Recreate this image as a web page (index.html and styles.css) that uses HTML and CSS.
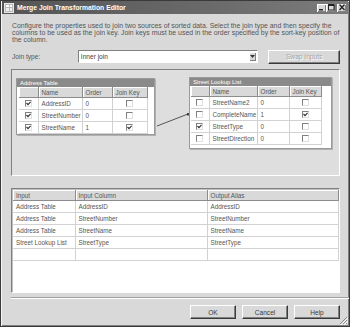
FILE: index.html
```html
<!DOCTYPE html>
<html lang="en">
<head>
  <meta charset="UTF-8">
  <title>Merge Join Transformation Editor</title>
  <link rel="stylesheet" href="styles.css">
</head>
<body>
  <div class="window">
    <div class="titlebar">
      <svg class="app-icon" width="10" height="10" viewBox="0 0 10 10">
        <rect x="0.5" y="0.5" width="9" height="9" fill="#b8b8b8" stroke="#e8e8e8"/>
        <rect x="2" y="2" width="3" height="2" fill="#fff"/>
        <rect x="6" y="2" width="2" height="2" fill="#fff"/>
        <rect x="2" y="5" width="3" height="3" fill="#eee"/>
        <rect x="6" y="5" width="2" height="3" fill="#eee"/>
      </svg>
      <span class="title">Merge Join Transformation Editor</span>
      <div class="caption-btns">
        <span class="cap-btn"><svg width="8" height="7" viewBox="0 0 8 7"><rect x="1" y="5" width="4" height="1.5" fill="#222"/></svg></span>
        <span class="cap-btn"><svg width="8" height="7" viewBox="0 0 8 7"><rect x="1.5" y="0.5" width="5.5" height="5.5" fill="none" stroke="#222"/><rect x="1" y="0.5" width="6.5" height="1.5" fill="#222"/></svg></span>
        <span class="cap-btn close"><svg width="8" height="7" viewBox="0 0 8 7"><path d="M1.5 0.5 L6.5 6 M6.5 0.5 L1.5 6" stroke="#222" stroke-width="1.3"/></svg></span>
      </div>
    </div>

    <div class="content">
      <p class="desc">Configure the properties used to join two sources of sorted data. Select the join type and then specify the<br>columns to be used as the join key. Join keys must be used in the order specified by the sort-key position of<br>the column.</p>

      <div class="join-row">
        <span class="join-label">Join type:</span>
        <div class="combo">
          <span class="combo-text">Inner join</span>
          <span class="combo-drop"><svg width="5" height="3" viewBox="0 0 5 3"><path d="M0 0 H5 L2.5 3 Z" fill="#333"/></svg></span>
        </div>
        <button class="btn btn-disabled">Swap Inputs</button>
      </div>

      <div class="canvas">
        <svg class="link" width="327" height="105">
          <line x1="145" y1="56" x2="176" y2="44" stroke="#555" stroke-width="1"/>
          <rect x="175" y="43" width="2.5" height="2.5" fill="#444"/>
        </svg>

        <div class="node node-address">
          <div class="node-title">Address Table</div>
          <div class="node-body">
            <table class="cols">
              <colgroup><col class="c-chk"><col class="c-name"><col class="c-order"><col class="c-key"></colgroup>
              <tr class="hdr"><th></th><th>Name</th><th>Order</th><th>Join Key</th></tr>
              <tr><td class="ck"><span class="chk on"></span></td><td>AddressID</td><td>0</td><td class="ck"><span class="chk"></span></td></tr>
              <tr><td class="ck"><span class="chk on"></span></td><td>StreetNumber</td><td>0</td><td class="ck"><span class="chk"></span></td></tr>
              <tr><td class="ck"><span class="chk on"></span></td><td>StreetName</td><td>1</td><td class="ck"><span class="chk on"></span></td></tr>
            </table>
          </div>
        </div>

        <div class="node node-street">
          <div class="node-title">Street Lookup List</div>
          <div class="node-body">
            <table class="cols">
              <colgroup><col class="c-chk2"><col class="c-name2"><col class="c-order2"><col class="c-key2"></colgroup>
              <tr class="hdr"><th></th><th>Name</th><th>Order</th><th>Join Key</th></tr>
              <tr><td class="ck"><span class="chk"></span></td><td>StreetName2</td><td>0</td><td class="ck"><span class="chk"></span></td></tr>
              <tr><td class="ck"><span class="chk"></span></td><td>CompleteName</td><td>1</td><td class="ck"><span class="chk on"></span></td></tr>
              <tr><td class="ck"><span class="chk on"></span></td><td>StreetType</td><td>0</td><td class="ck"><span class="chk"></span></td></tr>
              <tr><td class="ck"><span class="chk"></span></td><td>StreetDirection</td><td>0</td><td class="ck"><span class="chk"></span></td></tr>
            </table>
          </div>
        </div>
      </div>

      <div class="grid">
        <table class="out">
          <colgroup><col class="g-input"><col class="g-col"><col class="g-alias"></colgroup>
          <tr class="hdr"><th>Input</th><th>Input Column</th><th>Output Alias</th></tr>
          <tr><td>Address Table</td><td>AddressID</td><td>AddressID</td></tr>
          <tr><td>Address Table</td><td>StreetNumber</td><td>StreetNumber</td></tr>
          <tr><td>Address Table</td><td>StreetName</td><td>StreetName</td></tr>
          <tr><td>Street Lookup List</td><td>StreetType</td><td>StreetType</td></tr>
          <tr><td></td><td></td><td></td></tr>
        </table>
      </div>

      <div class="separator"></div>

      <div class="actions">
        <button class="btn">OK</button>
        <button class="btn">Cancel</button>
        <button class="btn">Help</button>
      </div>
    </div>

    <svg class="grip" width="9" height="9" viewBox="0 0 9 9">
      <path d="M8 1 L1 8 M8 4 L4 8 M8 7 L7 8" stroke="#888" stroke-width="1"/>
      <path d="M9 2 L2 9 M9 5 L5 9" stroke="#fff" stroke-width="1"/>
    </svg>
  </div>
</body>
</html>
```

FILE: styles.css
```css
:root {
  --face: #d9d9d9;
  --shadow: #808080;
  --dark: #3a3a3a;
  --text: #484848;
  --line: #d2d2d2;
}
html, body { margin:0; padding:0; background:var(--face); }
body { font-family:'Liberation Sans', Arial, sans-serif; font-size:6.3px; color:var(--text); }

.window { position:relative; box-sizing:border-box; width:350px; height:327px; background:var(--face); border:1px solid var(--dark); box-shadow:inset 1px 1px #f4f4f4, inset -1px -1px var(--shadow); overflow:hidden; }

.titlebar { display:flex; align-items:center; height:13px; margin:0 1px; background:linear-gradient(90deg, #555 0%, #6a6a6a 60%, #7c7c7c 100%); }
.app-icon { margin:0 3px 0 2px; flex:none; }
.title { color:#fff; font-weight:bold; font-size:6.8px; }
.caption-btns { margin-left:auto; margin-right:2px; display:flex; }
.cap-btn { display:flex; align-items:center; justify-content:center; width:9px; height:8px; background:var(--face); box-shadow:inset 1px 1px #fff, inset -1px -1px var(--shadow); }
.cap-btn.close { margin-left:2px; }

.content { padding:0 9px 0 10px; }

.desc { margin:8px 0 0 1px; font-size:6.9px; line-height:7px; white-space:nowrap; color:#555; }

.join-row { display:flex; align-items:center; height:13px; margin-top:7px; }
.join-label { width:66px; padding-left:1px; color:#555; font-size:6.6px; }
.combo { display:flex; align-items:center; box-sizing:border-box; width:181px; height:13px; background:#fff; border:1px solid; border-color:var(--shadow) #fff #fff var(--shadow); }
.combo-text { flex:1; padding-left:2px; color:#444; font-size:6.6px; }
.combo-drop { display:flex; align-items:center; justify-content:center; width:7px; height:9px; margin-right:1px; background:var(--face); box-shadow:inset 1px 1px #fff, inset -1px -1px var(--shadow); }

.btn { box-sizing:border-box; height:14px; padding:0; font:inherit; font-size:6.6px; color:#3a3a3a; background:var(--face); border:1px solid; border-color:#fff var(--dark) var(--dark) #fff; box-shadow:inset -1px -1px var(--shadow); }
.btn-disabled { width:72px; margin-left:10px; color:#a4a4a4; text-shadow:1px 1px #fff; }

.canvas { position:relative; box-sizing:border-box; height:107px; margin-top:6px; background:#dedede; border:1px solid; border-color:var(--shadow) #fff #fff var(--shadow); }
.link { position:absolute; left:0; top:0; }

.node { position:absolute; box-sizing:border-box; background:#fff; border:1px solid #9a9a9a; box-shadow:1px 1px #b0b0b0; }
.node-address { left:4px; top:8px; width:139px; height:57px; }
.node-street { left:177px; top:7px; width:143px; height:72px; }
.node-title { height:8px; line-height:8px; padding-left:3px; background:#8a8a8a; color:#fff; font-size:6px; white-space:nowrap; }
.node-address .node-body { padding-left:2px; }
.node-street .node-body { padding-left:1px; }

table { border-collapse:collapse; table-layout:fixed; }
.cols th, .cols td, .out th, .out td { padding:0 0 0 3px; text-align:left; white-space:nowrap; overflow:hidden; font-weight:normal; }
.cols .hdr th, .out .hdr th { height:10px; background:var(--face); border-right:1px solid #8c8c8c; border-bottom:1px solid #8c8c8c; box-shadow:inset 1px 1px #fff; color:#555; }
.cols td { height:11px; border-right:1px solid var(--line); border-bottom:1px solid var(--line); color:#555; }
.cols td.ck { padding:0; text-align:center; }
.c-chk { width:19px; } .c-name { width:44px; } .c-order { width:30px; } .c-key { width:35px; }
.c-chk2 { width:18px; } .c-name2 { width:48px; } .c-order2 { width:32px; } .c-key2 { width:32px; }

.chk { display:inline-block; box-sizing:border-box; width:7px; height:7px; vertical-align:middle; background:#fff; border:1px solid; border-color:#808080 #e0e0e0 #e0e0e0 #808080; }
.chk.on { background:#fff url("data:image/svg+xml,%3Csvg xmlns='http://www.w3.org/2000/svg' width='5' height='5'%3E%3Cpath d='M0.5 2 L2 3.6 L4.6 0.8' fill='none' stroke='%23333' stroke-width='1.2'/%3E%3C/svg%3E") center/5px 5px no-repeat; }

.grid { box-sizing:border-box; height:105px; margin-top:12px; background:#fff; border:1px solid; border-color:var(--shadow) #fff #fff var(--shadow); box-shadow:inset 1px 1px #c0c0c0; }
.out { margin:1px 0 0 1px; }
.out td { height:11px; border-right:1px solid var(--line); border-bottom:1px solid var(--line); color:#555; }
.g-input { width:62px; } .g-col { width:132px; } .g-alias { width:131px; }

.separator { height:0; margin:4px -9px 0 0; border-top:1px solid #a0a0a0; border-bottom:1px solid #fff; }

.actions { display:flex; justify-content:flex-end; gap:6px; margin-top:6px; }
.actions .btn { width:46px; }

.grip { position:absolute; right:1px; bottom:1px; }
```
